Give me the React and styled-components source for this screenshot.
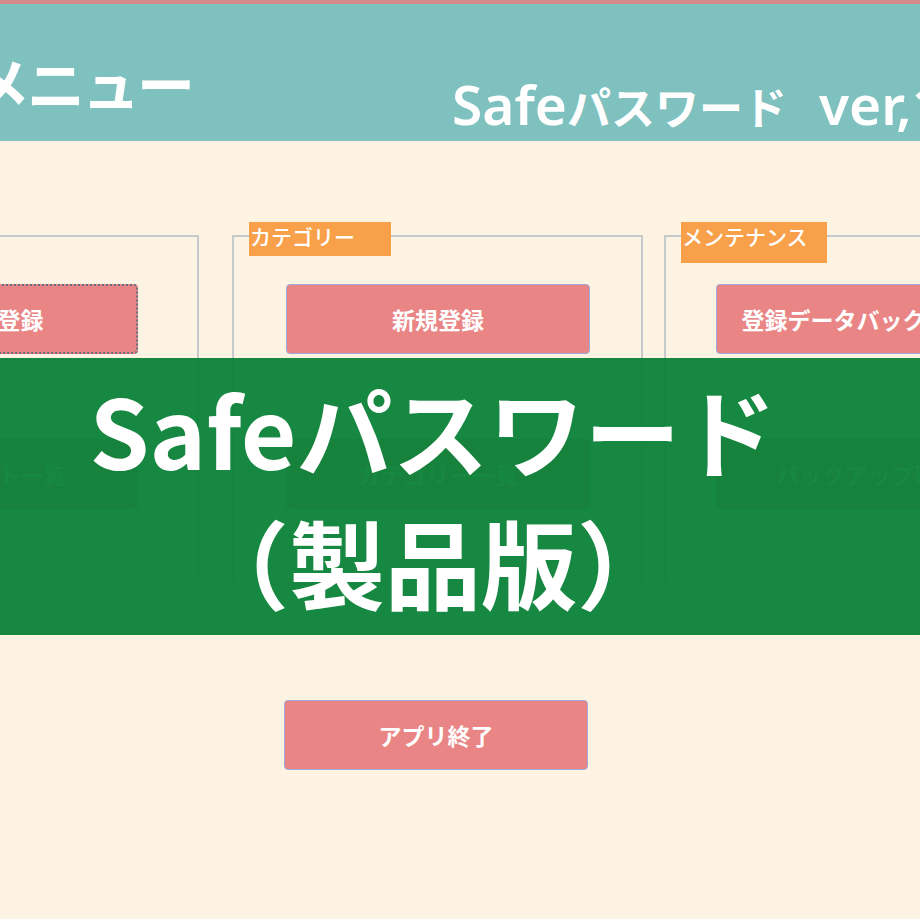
import React from "react";
import styled, { createGlobalStyle } from "styled-components";

const GlobalStyle = createGlobalStyle`
  html, body {
    margin: 0;
    padding: 0;
    background: #fdf3e2;
    overflow: hidden;
  }
  body {
    font-family: "Noto Sans CJK JP", "Noto Sans", sans-serif;
  }
`;

const groups = [
  {
    label: "パスワード",
    inset: 32,
    nudge: 6,
    buttons: ["サイト登録", "アカウント一覧"],
    focused: 0,
  },
  {
    label: "カテゴリー",
    labelWidth: 142,
    labelHeight: 34,
    inset: 52,
    nudge: 0,
    buttons: ["新規登録", "カテゴリー一覧"],
  },
  {
    label: "メンテナンス",
    labelWidth: 146,
    labelHeight: 41,
    inset: 50,
    nudge: -6,
    buttons: ["登録データバックアップ", "バックアップ取込"],
  },
];

export default function App() {
  return (
    <>
      <GlobalStyle />
      <Page>
        <TopStrip />
        <Header>
          <Title>メニュー</Title>
          <Version>
            <Latin>Safe</Latin>
            <Kana>パスワード</Kana>
            <Latin $gap>ver,1.0</Latin>
          </Version>
        </Header>

        <Columns>
          {groups.map((g) => (
            <Group key={g.label} $nudge={g.nudge}>
              <Label $w={g.labelWidth || 130} $h={g.labelHeight || 34}>
                {g.label}
              </Label>
              <ButtonStack $inset={g.inset}>
                {g.buttons.map((b, i) => (
                  <MenuButton key={b} $focused={g.focused === i}>
                    {b}
                  </MenuButton>
                ))}
              </ButtonStack>
            </Group>
          ))}
        </Columns>

        <ExitRow>
          <MenuButton>アプリ終了</MenuButton>
        </ExitRow>

        <Banner>
          <BannerLine>Safeパスワード</BannerLine>
          <BannerLine>（製品版）</BannerLine>
        </Banner>
      </Page>
    </>
  );
}

const Page = styled.div`
  position: relative;
  width: 920px;
  height: 919px;
  overflow: hidden;
  background: #fdf3e2;
`;

const TopStrip = styled.div`
  height: 4px;
  background: #d58b8b;
`;

const Header = styled.header`
  height: 137px;
  background: #7fc1bf;
  color: #fff;
  display: grid;
  grid-template-columns: 452px auto;
  white-space: nowrap;
  overflow: hidden;
`;

const Title = styled.h1`
  margin: 49px 0 0 -28px;
  font-size: 58px;
  font-weight: 700;
  line-height: 1;
  letter-spacing: -3px;
`;

const Version = styled.div`
  align-self: end;
  margin-bottom: 10px;
  display: flex;
  align-items: baseline;
`;

const Latin = styled.span`
  font-family: "Noto Sans", "Noto Sans CJK JP", sans-serif;
  font-size: 55px;
  font-weight: 600;
  line-height: 1;
  margin-left: ${(p) => (p.$gap ? "32px" : "0")};
`;

const Kana = styled.span`
  font-size: 44px;
  font-weight: 700;
  line-height: 1;
`;

const Columns = styled.section`
  display: grid;
  grid-template-columns: 405px 411px 411px;
  column-gap: 27px;
  margin: 94px 0 0 -200px;
`;

const Group = styled.div`
  position: relative;
  height: 350px;
  box-sizing: border-box;
  border: 2px solid #c6cacb;
  margin-left: ${(p) => (p.$nudge < 0 ? p.$nudge : 0)}px;
  margin-right: ${(p) => (p.$nudge > 0 ? p.$nudge : 0)}px;
  padding-top: 47px;
`;

const Label = styled.div`
  position: absolute;
  top: -15px;
  left: 15px;
  width: ${(p) => p.$w}px;
  height: ${(p) => p.$h}px;
  box-sizing: border-box;
  background: #f9a04b;
  color: #fff;
  font-size: 21px;
  font-weight: 500;
  line-height: 28px;
  padding-left: 1px;
  white-space: nowrap;
`;

const ButtonStack = styled.div`
  display: flex;
  flex-direction: column;
  gap: 85px;
  padding-left: ${(p) => p.$inset}px;
`;

const MenuButton = styled.button`
  width: 304px;
  height: 70px;
  box-sizing: border-box;
  background: #e98584;
  border: ${(p) => (p.$focused ? "2px dotted #6a6f80" : "1px solid #9dabd8")};
  border-radius: 4px;
  color: #fff;
  font-family: "Noto Sans CJK JP", sans-serif;
  font-size: 23px;
  font-weight: 700;
  white-space: nowrap;
  padding: 0;
  cursor: pointer;
`;

const ExitRow = styled.div`
  display: flex;
  padding: 115px 0 0 284px;
`;

const Banner = styled.div`
  position: absolute;
  top: 358px;
  left: 0;
  right: 0;
  height: 277px;
  box-sizing: border-box;
  padding: 5px 54px 0 0;
  background: rgba(11, 130, 56, 0.95);
  color: #fff;
  text-align: center;
`;

const BannerLine = styled.div`
  font-size: 96px;
  font-weight: 700;
  line-height: 1.37;
  white-space: nowrap;
`;
